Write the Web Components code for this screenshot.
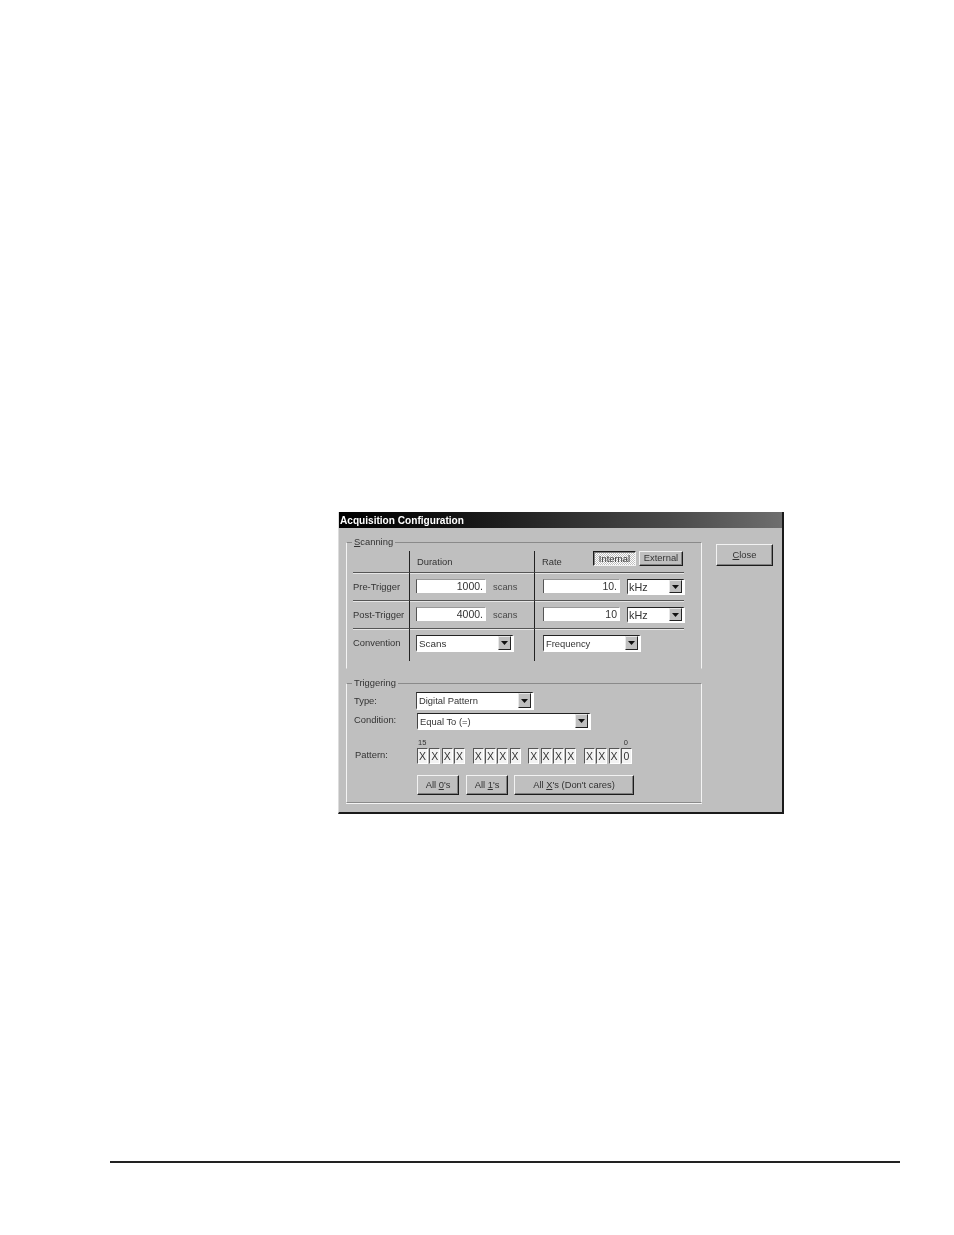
<!DOCTYPE html>
<html><head><meta charset="utf-8"><title>Acquisition Configuration</title>
<style>html,body{margin:0;background:#fff}</style></head><body>
<x-page>
<x-dialog heading="Acquisition Configuration">
  <x-group label="Scanning" ukey="S" open-bottom style="height:127px">
    <x-scan-grid>
      <x-gc kind="c1 hd"></x-gc>
      <x-gc kind="c2 hd"><x-t style="margin-top:5px;margin-left:1px">Duration</x-t></x-gc>
      <x-gc kind="c3 hd"><x-t style="margin-top:5px;margin-left:-1px;width:51px">Rate</x-t><x-btn pressed style="width:43px;height:15px">Internal</x-btn><x-btn style="width:44px;height:15px;margin-left:3px">External</x-btn></x-gc>

      <x-gc kind="c1 r"><x-t style="margin-top:2px">Pre-Trigger</x-t></x-gc>
      <x-gc kind="c2 r"><x-input style="width:70px">1000.</x-input><x-t dim style="margin:2px 0 0 7px">scans</x-t></x-gc>
      <x-gc kind="c3 r"><x-input style="width:77px">10.</x-input><x-select style="width:58px;margin-left:7px;font-size:10.8px;padding-left:1px">kHz</x-select></x-gc>

      <x-gc kind="c1 r"><x-t style="margin-top:2px">Post-Trigger</x-t></x-gc>
      <x-gc kind="c2 r"><x-input style="width:70px">4000.</x-input><x-t dim style="margin:2px 0 0 7px">scans</x-t></x-gc>
      <x-gc kind="c3 r"><x-input style="width:77px">10</x-input><x-select style="width:58px;margin-left:7px;font-size:10.8px;padding-left:1px">kHz</x-select></x-gc>

      <x-gc kind="c1"><x-t style="margin-top:2px">Convention</x-t></x-gc>
      <x-gc kind="c2"><x-select style="width:98px;height:17px;font-size:9.9px">Scans</x-select></x-gc>
      <x-gc kind="c3"><x-select style="width:98px;height:17px">Frequency</x-select></x-gc>
    </x-scan-grid>
  </x-group>
  <x-group label="Triggering" style="height:120px;margin-top:14px">
    <x-row style="height:18px;margin-left:1px"><x-t style="margin-top:3px;width:62px">Type:</x-t><x-select style="width:118px;height:18px">Digital Pattern</x-select></x-row>
    <x-row style="height:17px;margin:3px 0 0 1px"><x-t style="margin-top:1px;width:63px">Condition:</x-t><x-select style="width:174px;height:17px">Equal To (=)</x-select></x-row>
    <x-nums><span>15</span><span>0</span></x-nums>
    <x-row style="height:16px;margin-left:2px"><x-t style="margin-top:1px;width:62px">Pattern:</x-t>
      <x-cells>
        <x-cell>X</x-cell><x-cell>X</x-cell><x-cell>X</x-cell><x-cell>X</x-cell><x-gap></x-gap>
        <x-cell>X</x-cell><x-cell>X</x-cell><x-cell>X</x-cell><x-cell>X</x-cell><x-gap></x-gap>
        <x-cell>X</x-cell><x-cell>X</x-cell><x-cell>X</x-cell><x-cell>X</x-cell><x-gap></x-gap>
        <x-cell>X</x-cell><x-cell>X</x-cell><x-cell>X</x-cell><x-cell>0</x-cell>
      </x-cells>
    </x-row>
    <x-row style="margin:11px 0 0 64px">
      <x-btn style="width:42px;height:20px">All <u>0</u>'s</x-btn>
      <x-btn style="width:42px;height:20px;margin-left:7px">All <u>1</u>'s</x-btn>
      <x-btn style="width:120px;height:20px;margin-left:6px">All <u>X</u>'s (Don't cares)</x-btn>
    </x-row>
  </x-group>
  <x-btn slot="side" style="width:57px;height:22px"><u>C</u>lose</x-btn>
</x-dialog>
<x-rule></x-rule>
</x-page>
<script>
const FONT='"Liberation Sans",Arial,sans-serif';
function def(name,css,html){
  customElements.define(name,class extends HTMLElement{
    constructor(){super();const r=this.attachShadow({mode:'open'});
      r.innerHTML='<style>'+css+'</style>'+(typeof html==='function'?html(this):html);}
  });
}
def('x-page',`:host{display:block;width:954px;height:1235px;padding-top:512px;box-sizing:border-box;overflow:hidden;background:#fff;color:#333;font:9.4px/11px ${FONT}}`,'<slot></slot>');
def('x-rule',`:host{display:block;height:2px;width:790px;margin:347px 0 0 110px;background:#222}`,'');
def('x-dialog',`:host{display:flex;flex-direction:column;box-sizing:border-box;width:446px;height:302px;margin-left:338px;background:#bfbfbf;border:solid;border-width:0 2px 2px 1px;border-color:#1a1a1a #1a1a1a #1a1a1a #dcdcdc;filter:blur(.25px)}
.title{height:16px;flex:none;background:linear-gradient(90deg,#000 0,#111 25%,#4a4a4a 75%,#6e6e6e 100%);color:#fff;font:bold 10.1px/17px ${FONT};padding-left:1px}
.body{display:flex;padding:14px 0 0 7px}
.main{width:356px;flex:none}
.side{margin:2px 0 0 14px}`,
 el=>`<div class="title">${el.getAttribute('heading')}</div><div class="body"><div class="main"><slot></slot></div><div class="side"><slot name="side"></slot></div></div>`);
def('x-group',`:host{display:block;box-sizing:border-box;position:relative;border:1px solid #8a8a8a;border-left-color:#f4f4f4;border-right-color:#f4f4f4;box-shadow:0 1px 0 #f4f4f4;padding:8px 0 0 6px}
:host([open-bottom]){border-bottom-color:transparent;box-shadow:none}
.lg{position:absolute;left:5px;top:-7px;background:#bfbfbf;padding:0 2px;line-height:11px}`,
 el=>{const l=el.getAttribute('label'),k=el.getAttribute('ukey');
   const t=k&&l.startsWith(k)?`<u>${k}</u>${l.slice(k.length)}`:l;
   return `<div class="lg">${t}</div><slot></slot>`});
def('x-t',`:host{display:block;flex:none;white-space:nowrap}:host([dim]){color:#4a4a4a}`,'<slot></slot>');
def('x-scan-grid',`:host{display:grid;grid-template-columns:56px 125px 150px;grid-template-rows:22px 28px 28px 32px}`,'<slot></slot>');
def('x-gc',`:host{display:flex;align-items:flex-start;box-sizing:border-box;padding-top:6px}
:host([kind~=hd]){padding-top:0}
:host([kind~=hd]),:host([kind~=r]){border-bottom:1px solid #555;box-shadow:0 1px 0 #e6e6e6}
:host([kind~=c2]){border-left:1px solid #222;padding-left:6px}
:host([kind~=c3]){border-left:1px solid #222;padding-left:8px}`,'<slot></slot>');
def('x-row',`:host{display:flex;align-items:flex-start}`,'<slot></slot>');
def('x-nums',`:host{display:flex;justify-content:space-between;height:10px;margin:8px 0 0 64px;width:214px;font-size:7.5px;line-height:10px;padding:0 3px 0 1px;box-sizing:border-box}`,'<slot></slot>');
def('x-cells',`:host{display:flex;gap:1.33px}`,'<slot></slot>');
def('x-gap',`:host{display:block;flex:none;width:5px}`,'');
def('x-input',`:host{display:block;flex:none;box-sizing:border-box;height:14px;background:#fff;border:solid;border-width:1px 1px 0 1px;border-color:#999 #fff #fff #555;text-align:right;padding-right:2px;line-height:13px;font-size:10.5px;white-space:nowrap}`,'<slot></slot>');
def('x-select',`:host{display:flex;flex:none;box-sizing:border-box;height:16px;background:#fff;border:solid;border-width:1px 2px 2px 1px;border-color:#222 #fff #fff #444;padding:1px 1px 0 2px;justify-content:space-between;white-space:nowrap}
.tx{line-height:13px}
.arr{flex:none;width:13px;margin-top:-1px;background:#bfbfbf;box-sizing:border-box;border:1px solid;border-color:#e8e8e8 #222 #222 #e8e8e8;display:flex;align-items:center;justify-content:center}
svg{display:block}`,
 `<span class="tx"><slot></slot></span><span class="arr"><svg width="7" height="4" viewBox="0 0 7 4"><path d="M0 0H7L3.5 4Z" fill="#111"/></svg></span>`);
def('x-btn',`:host{display:flex;flex:none;align-items:center;justify-content:center;box-sizing:border-box;background:#bfbfbf;border:1px solid;border-color:#f2f2f2 #1c1c1c #1c1c1c #f2f2f2;box-shadow:inset -1px -1px 0 #808080;white-space:nowrap;padding-bottom:2px}
:host([pressed]){padding-bottom:0;border-color:#1c1c1c #f2f2f2 #f2f2f2 #1c1c1c;box-shadow:inset 1px 1px 0 #808080;background:repeating-conic-gradient(#fff 0 25%,#bfbfbf 0 50%) 0 0/2px 2px}`,'<span><slot></slot></span>');
def('x-cell',`:host{display:block;flex:none;box-sizing:border-box;width:11px;height:16px;background:#f2f2f2;border:1px solid;border-color:#555 #fff #fff #555;text-align:center;font-size:10.5px;line-height:15px}`,'<slot></slot>');
</script>
</body></html>
